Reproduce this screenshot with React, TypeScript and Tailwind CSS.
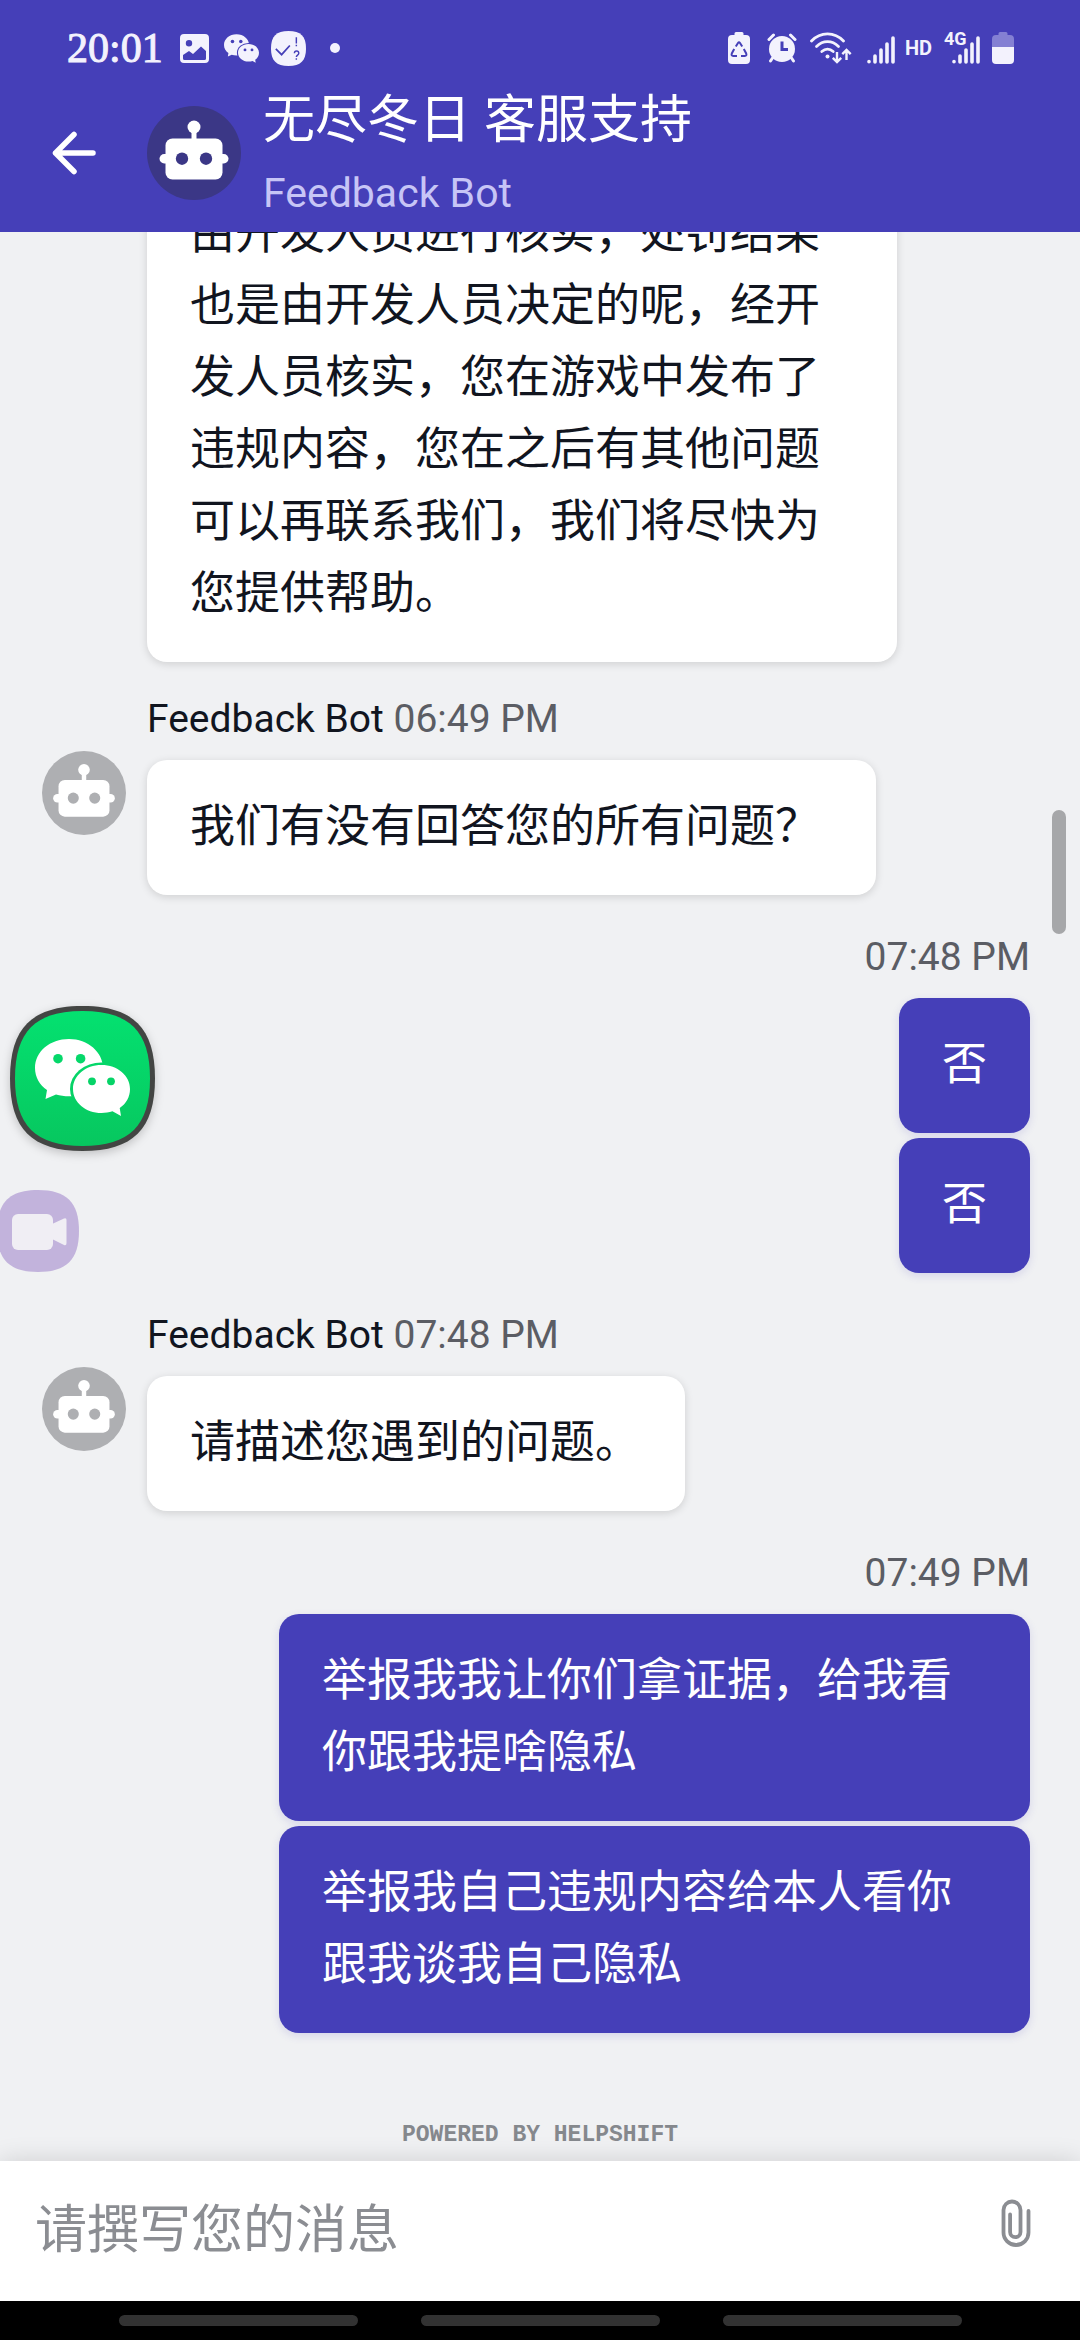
import { useId } from "react";
import type { ReactNode } from "react";

const SQUIRCLE =
  "M72.5 0C123 0 145 22 145 72.5S123 145 72.5 145 0 123 0 72.5 22 0 72.5 0Z";

function RobotAvatar({ className }: { className: string }) {
  return (
    <svg viewBox="0 0 94 94" className={className} aria-hidden="true">
      <circle cx="47" cy="47" r="47" fill="currentColor" />
      <g fill="#fff">
        <circle cx="47" cy="21" r="6.5" />
        <path d="M44.5 24h5v10h-5z" />
        <rect x="18.5" y="32.5" width="57" height="41" rx="7" />
        <rect x="12.500" y="48" width="69" height="9.500" rx="4.750" />
      </g>
      <circle cx="35" cy="52.700" r="6.200" fill="currentColor" />
      <circle cx="59" cy="52.700" r="6.200" fill="currentColor" />
    </svg>
  );
}

function WechatGlyph() {
  const back = useId();
  const front = useId();
  return (
    <>
      <mask id={back} maskUnits="userSpaceOnUse" x="0" y="0" width="145" height="145">
        <rect width="145" height="145" fill="#fff" />
        <g fill="#000">
          <circle cx="48" cy="52.700" r="4.800" />
          <circle cx="70.600" cy="52.700" r="4.800" />
          <ellipse cx="91.500" cy="83" rx="31.500" ry="26.500" />
        </g>
      </mask>
      <mask id={front} maskUnits="userSpaceOnUse" x="0" y="0" width="145" height="145">
        <rect width="145" height="145" fill="#fff" />
        <g fill="#000">
          <circle cx="82" cy="75.300" r="3.900" />
          <circle cx="101" cy="75.300" r="3.900" />
        </g>
      </mask>
      <path
        mask={`url(#${back})`}
        d="M59 33C40 33 25 45.500 25 62c0 9 4.500 17 12 22l-1.500 9 10.500-4.500c4 1.200 8.500 1.800 13 1.800 19 0 34-12.500 34-28.300S78 33 59 33Z"
      />
      <path
        mask={`url(#${front})`}
        d="M91.500 59C75.500 59 63 69.500 63 83s12.500 24 28.500 24c3.800 0 7.500-.6 11-1.700l8.500 4.700-1.300-8C116 98 120 91 120 83c0-13.500-12.500-24-28.500-24Z"
      />
    </>
  );
}

function ImageIcon() {
  return (
    <svg viewBox="0 0 29 29" className="size-[29px]" aria-hidden="true">
      <path
        fill="currentColor"
        fillRule="evenodd"
        d="M4 0h21a4 4 0 0 1 4 4v21a4 4 0 0 1-4 4H4a4 4 0 0 1-4-4V4a4 4 0 0 1 4-4Zm5 6a3.200 3.200 0 1 0 0 6.400A3.200 3.200 0 0 0 9 6ZM3 21v3.500A1.500 1.500 0 0 0 4.500 26h20a1.500 1.500 0 0 0 1.500-1.500V17l-5-4.500L13 20l-4-3Z"
      />
    </svg>
  );
}

function CheckAppIcon() {
  return (
    <svg viewBox="0 0 145 145" className="size-[35px]" aria-hidden="true">
      <path d={SQUIRCLE} fill="currentColor" />
      <path d="M20 74l24 24 34-38" fill="none" stroke="#453fb8" strokeWidth="7" />
      <g fill="none" stroke="#453fb8" strokeWidth="6">
        <path d="M105 26v26M105 57v6" />
        <path d="M97 92c0-12 18-12 18 0 0 8-10 8-10 16M105 113v6" />
      </g>
    </svg>
  );
}

function RecycleBattery() {
  return (
    <svg viewBox="0 0 22 32" className="h-8 w-[22px]" aria-hidden="true">
      <path
        fill="currentColor"
        d="M8 0h6a1.500 1.500 0 0 1 1.500 1.500V3H18a4 4 0 0 1 4 4v21a4 4 0 0 1-4 4H4a4 4 0 0 1-4-4V7a4 4 0 0 1 4-4h2.500V1.500A1.500 1.500 0 0 1 8 0Z"
      />
      <g fill="none" stroke="#453fb8" strokeWidth="2">
        <path d="M7.800 14.500 10 11q1-1.500 2 0l2.200 3.500" />
        <path d="m15.800 17 2.400 4.500q.8 2.500-1.400 2.500H13" />
        <path d="m6.200 17-2.400 4.500Q3 24 5.200 24H9" />
      </g>
    </svg>
  );
}

function AlarmIcon() {
  return (
    <svg viewBox="0 0 30 30" className="size-[30px]" aria-hidden="true">
      <circle cx="15" cy="16" r="13" fill="currentColor" />
      <g fill="none" stroke="currentColor" strokeLinecap="round" strokeWidth="3">
        <path d="M2 6.500 6.500 2M28 6.500 23.500 2M5.500 25l-2 3M24.500 25l2 3" />
      </g>
      <path d="M15 8.500V16.500h6" fill="none" stroke="#453fb8" strokeWidth="3" />
    </svg>
  );
}

function WifiIcon() {
  return (
    <svg viewBox="0 0 42 32" className="h-8 w-[42px]" aria-hidden="true">
      <g fill="none" stroke="currentColor" strokeLinecap="round" strokeWidth="2.800">
        <path d="M1.500 9c9-9.500 23-9.500 32 0" />
        <path d="M6.500 14.500c6.500-6.500 15.500-6.500 22 0" />
        <path d="M11.800 19.500c3.500-3 8-3 11.400 0" />
      </g>
      <circle cx="17.500" cy="24.500" r="2" fill="currentColor" />
      <g fill="none" stroke="currentColor" strokeWidth="2.400">
        <path d="M27 20v10M22.800 25.800 27 30l4.200-4.200M36.500 28V18M32.300 22.200l4.200-4.200 4.200 4.200" />
      </g>
    </svg>
  );
}

function SignalIcon() {
  return (
    <svg viewBox="0 0 28 28" className="size-7" aria-hidden="true">
      <g stroke="currentColor" strokeWidth="3.600" strokeLinecap="round">
        <path d="M2 25.500v.3M8 20v6M14 14v12M20 8v18M26 2v24" />
      </g>
    </svg>
  );
}

function BatteryIcon() {
  return (
    <svg viewBox="0 0 22 32" className="h-8 w-[22px]" aria-hidden="true">
      <path
        fill="#8480d3"
        d="M8 0h6a1.500 1.500 0 0 1 1.500 1.500V3H18a4 4 0 0 1 4 4v8H0V7a4 4 0 0 1 4-4h2.500V1.500A1.500 1.500 0 0 1 8 0Z"
      />
      <path fill="currentColor" d="M0 15h22v13a4 4 0 0 1-4 4H4a4 4 0 0 1-4-4Z" />
    </svg>
  );
}

function StatusBar() {
  return (
    <div className="flex h-[72px] items-center pt-6 pr-[66px] pl-[67px] text-[#f3f2fd]">
      <time className="font-['Liberation_Serif',serif] text-[42px] leading-[48px] [-webkit-text-stroke:1px_currentColor]">
        20:01
      </time>
      <div className="ml-[17px] flex items-center">
        <ImageIcon />
        <svg viewBox="25 33 95 77" className="ml-[15px] h-[29px] w-[35px] fill-current" aria-hidden="true">
          <WechatGlyph />
        </svg>
        <span className="ml-3">
          <CheckAppIcon />
        </span>
        <span className="ml-6 size-[10px] rounded-full bg-current" />
      </div>
      <div className="ml-auto flex items-center font-['Roboto',sans-serif] font-bold">
        <RecycleBattery />
        <span className="ml-[17px]">
          <AlarmIcon />
        </span>
        <span className="ml-[13px]">
          <WifiIcon />
        </span>
        <span className="mt-1 ml-[15px]">
          <SignalIcon />
        </span>
        <span className="ml-[10px] text-[20px] leading-6">HD</span>
        <div className="relative mt-1 ml-5">
          <SignalIcon />
          <span className="absolute -top-1.5 -left-2 text-[18px] leading-[18px]">4G</span>
        </div>
        <span className="ml-3">
          <BatteryIcon />
        </span>
      </div>
    </div>
  );
}

function Header() {
  return (
    <header className="shrink-0 bg-[#453fb8]">
      <StatusBar />
      <div className="flex h-40 items-center pt-0.5 pl-[52px]">
        <button type="button" aria-label="返回" className="size-11 text-white">
          <svg viewBox="0 0 44 44" className="size-11" aria-hidden="true">
            <path
              d="M22 3.500 3.500 22 22 40.500M3.500 22H41"
              fill="none"
              stroke="currentColor"
              strokeWidth="5.500"
              strokeLinecap="round"
              strokeLinejoin="round"
            />
          </svg>
        </button>
        <RobotAvatar className="ml-[51px] size-[94px] shrink-0 text-[#3b3786]" />
        <div className="ml-[22px]">
          <h1 className="text-[52px] leading-[68px] text-white">无尽冬日 客服支持</h1>
          <p className="mt-3 text-[41px] leading-[52px] text-[#c7c5f6]">Feedback Bot</p>
        </div>
      </div>
    </header>
  );
}

function Bubble({ children, own = false }: { children: ReactNode; own?: boolean }) {
  return (
    <p
      className={
        own
          ? "max-w-[751px] rounded-[20px] bg-[#453fb8] px-[43px] pt-[31px] pb-8 text-[45px] leading-[72px] text-white shadow-[0_3px_8px_rgba(69,63,184,0.15)]"
          : "max-w-[750px] rounded-[20px] bg-white pt-[31px] pr-[45px] pb-8 pl-[43px] text-[45px] leading-[72px] text-[#11151f] shadow-[0_2px_8px_rgba(0,0,0,0.14)]"
      }
    >
      {children}
    </p>
  );
}

function BotMessage({ time, className, children }: { time: string; className: string; children: ReactNode }) {
  return (
    <article className={className}>
      <div className="mb-[13px] ml-[147px] text-[39px] leading-[56px] text-[#5b5d64]">
        <span className="text-[#11151f]">Feedback Bot</span> <time>{time}</time>
      </div>
      <div className="flex items-start gap-[21px] pl-[42px]">
        <RobotAvatar className="-mt-[9px] size-[84px] shrink-0 text-[#aeafb2]" />
        <Bubble>{children}</Bubble>
      </div>
    </article>
  );
}

function OwnMessages({ time, texts }: { time: string; texts: string[] }) {
  return (
    <article className="mt-[34px] flex flex-col items-end pr-[50px]">
      <time className="mb-[13px] text-[39px] leading-[56px] text-[#5b5d64]">{time}</time>
      <div className="flex flex-col items-end gap-[5px]">
        {texts.map((text, index) => (
          <Bubble key={index} own>
            {text}
          </Bubble>
        ))}
      </div>
    </article>
  );
}

function FloatingButtons() {
  const fill = useId();
  return (
    <>
      <button type="button" aria-label="微信" className="absolute top-[1006px] left-[10px] size-[145px]">
        <svg
          viewBox="0 0 145 145"
          className="size-[145px] overflow-visible drop-shadow-[0_3px_5px_rgba(0,0,0,0.2)]"
          aria-hidden="true"
        >
          <linearGradient id={fill} x1="0" y1="0" x2="0" y2="1">
            <stop offset="0" stopColor="#04e170" />
            <stop offset="1" stopColor="#07c75f" />
          </linearGradient>
          <path d={SQUIRCLE} fill="#434543" />
          <g transform="translate(5 5) scale(0.931)">
            <path d={SQUIRCLE} fill={`url(#${fill})`} />
          </g>
          <g fill="#fff">
            <WechatGlyph />
          </g>
        </svg>
      </button>
      <button type="button" aria-label="录像" className="absolute top-[1190px] -left-[3px] size-[82px]">
        <svg viewBox="0 0 82 82" className="size-[82px]" aria-hidden="true">
          <g transform="scale(0.5655)">
            <path d={SQUIRCLE} fill="#c2b3dc" />
          </g>
          <g fill="#f0eef4">
            <rect x="15" y="24" width="41" height="36" rx="6" />
            <path d="M54 34.500 67 28.500q2.500-1 2.500 1.500V53q0 3-2.500 2L54 48.500Z" />
          </g>
        </svg>
      </button>
    </>
  );
}

function Composer() {
  return (
    <form
      className="relative flex h-[140px] shrink-0 items-center bg-white pr-[44px] pl-[35px] shadow-[0_0_24px_rgba(0,0,0,0.14)]"
      onSubmit={(event) => event.preventDefault()}
    >
      <input
        type="text"
        aria-label="请撰写您的消息"
        placeholder="请撰写您的消息"
        className="h-20 min-w-0 flex-1 text-[52px] leading-[80px] text-[#11151f] outline-none placeholder:text-[#8b8d92]"
      />
      <button type="button" aria-label="添加附件" className="mb-4 flex h-12 w-10 items-center justify-center text-[#8b8d92]">
        <svg viewBox="0 0 30 48" className="h-12 w-[30px]" aria-hidden="true">
          <path
            d="M27 12v21.500a12.500 12.500 0 0 1-25 0V11a8.500 8.500 0 0 1 17 0v22a5.200 5.200 0 0 1-10.400 0V15.500"
            fill="none"
            stroke="currentColor"
            strokeWidth="3.800"
            strokeLinecap="round"
            transform="translate(.5 0)"
          />
        </svg>
      </button>
    </form>
  );
}

function NavigationBar() {
  return (
    <div className="flex h-[39px] shrink-0 items-center justify-center gap-[63px] bg-black">
      <span className="h-[11px] w-[239px] rounded-full bg-[#333333]" />
      <span className="h-[11px] w-[239px] rounded-full bg-[#333333]" />
      <span className="h-[11px] w-[239px] rounded-full bg-[#333333]" />
    </div>
  );
}

export default function App() {
  return (
    <div className="relative flex h-screen flex-col overflow-hidden bg-[#f0f1f3] font-['Roboto','Noto_Sans_CJK_SC',sans-serif]">
      <Header />
      <main className="flex min-h-0 flex-1 flex-col justify-end overflow-hidden">
        <div className="flex pl-[147px]">
          <Bubble>
            由开发人员进行核实，处罚结果也是由开发人员决定的呢，经开发人员核实，您在游戏中发布了违规内容，您在之后有其他问题可以再联系我们，我们将尽快为您提供帮助。
          </Bubble>
        </div>
        <BotMessage time="06:49 PM" className="mt-[29px]">
          我们有没有回答您的所有问题？{"\u00a0"}
        </BotMessage>
        <OwnMessages time="07:48 PM" texts={["否", "否"]} />
        <BotMessage time="07:48 PM" className="mt-[34px]">
          请描述您遇到的问题。
        </BotMessage>
        <OwnMessages
          time="07:49 PM"
          texts={["举报我我让你们拿证据，给我看你跟我提啥隐私", "举报我自己违规内容给本人看你跟我谈我自己隐私"]}
        />
        <p className="mt-[88px] mb-3 text-center font-['Liberation_Mono',monospace] text-[23px] leading-7 font-bold text-[#85888d]">
          POWERED BY HELPSHIFT
        </p>
      </main>
      <Composer />
      <NavigationBar />
      <div className="absolute top-[810px] right-[14px] h-[124px] w-[14px] rounded-full bg-[#a6a7a9]" />
      <FloatingButtons />
    </div>
  );
}
